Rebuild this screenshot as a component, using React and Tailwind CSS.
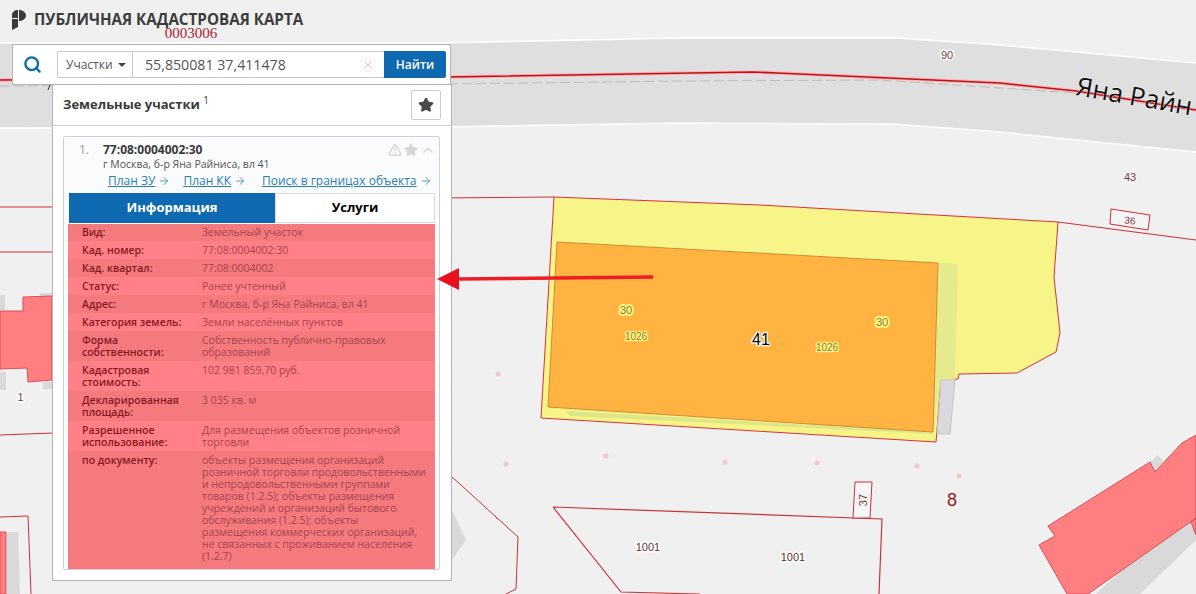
import React from 'react';
import { ArrowRight, ChevronUp, Search, Star, TriangleAlert, X } from 'lucide-react';

const rows = [
    { label: 'Вид:', value: 'Земельный участок', h: 'h-[17px]', dark: true },
    { label: 'Кад. номер:', value: '77:08:0004002:30', h: 'h-[18px]' },
    { label: 'Кад. квартал:', value: '77:08:0004002', h: 'h-[18px]', dark: true },
    { label: 'Статус:', value: 'Ранее учтенный', h: 'h-[18px]' },
    { label: 'Адрес:', value: 'г Москва, б-р Яна Райниса, вл 41', h: 'h-[18px]', dark: true },
    { label: 'Категория земель:', value: 'Земли населённых пунктов', h: 'h-[18px]' },
    { label: ['Форма', 'собственности:'], value: ['Собственность публично-правовых', 'образований'], h: 'h-[30px]', dark: true },
    { label: ['Кадастровая', 'стоимость:'], value: '102 981 859,70 руб.', h: 'h-[30px]' },
    { label: ['Декларированная', 'площадь:'], value: '3 035 кв. м', h: 'h-[30px]', dark: true },
    { label: ['Разрешенное', 'использование:'], value: ['Для размещения объектов розничной', 'торговли'], h: 'h-[30px]' },
    {
        label: 'по документу:',
        value: [
            'объекты размещения организаций',
            'розничной торговли продовольственными',
            'и непродовольственными группами',
            'товаров (1.2.5); объекты размещения',
            'учреждений и организаций бытового',
            'обслуживания (1.2.5); объекты',
            'размещения коммерческих организаций,',
            'не связанных с проживанием населения',
            '(1.2.7)',
        ],
        h: 'h-[118px]',
        dark: true,
    },
];

const Lines = ({ text }) =>
    [].concat(text).map(line => (
        <div key={line} className="whitespace-nowrap">{line}</div>
    ));

const MapLabel = ({ x, y, size = 11, fill = '#7a3b3b', halo = '#ffffff', width = 3, children, ...rest }) => (
    <text
        x={x}
        y={y}
        textAnchor="middle"
        fontSize={size}
        fill={fill}
        stroke={halo}
        strokeWidth={width}
        strokeLinejoin="round"
        paintOrder="stroke"
        fontFamily="'Liberation Sans', sans-serif"
        {...rest}
    >
        {children}
    </text>
);

// the cadastral map under the panels
const CadastreMap = () => (
    <svg className="absolute inset-0" width="1196" height="594" viewBox="0 0 1196 594">
        {/* road */}
        <path d="M0 43 L440 43 L680 38 L898 38 L1000 45 L1196 63 L1196 152 L1000 132 L893 124 L680 123 L440 127 L0 128 Z" fill="#dfdfdf" />
        <path d="M0 43 L440 43 L680 38 L898 38 L1000 45 L1196 63" fill="none" stroke="#ffffff" strokeWidth="1.5" />
        <path d="M0 128 L440 127 L680 123 L893 124 L1000 132 L1196 152" fill="none" stroke="#ffffff" strokeWidth="1.5" />
        <path d="M0 86 L448 84 L680 81 L880 80 L1076 93" fill="none" stroke="#c4b8b8" strokeWidth="1" strokeDasharray="10 4" />
        <path d="M0 80 L448 77 L753 72 L777 73 L1000 83 L1076 91 L1196 110" fill="none" stroke="#ffb4b4" strokeWidth="3.5" />
        <path d="M0 80 L448 77 L753 72 L777 73 L1000 83 L1076 91 L1196 110" fill="none" stroke="#b9141c" strokeWidth="1.5" />
        <path d="M48 90 L50 85" stroke="#333333" strokeWidth="1" />

        {/* parcel line above the lot */}
        <path d="M0 207 L53 207 M0 252 L53 252 M440 198 L554 197 M1058 222 L1196 240 M0 435 L53 433" fill="none" stroke="#c8323a" strokeWidth="1" />

        {/* lot with the building */}
        <path d="M554 197 L760 205 L1058 222 L1054 277 L1060 333 L1056 352 L1017 373 L959 374 L958 379 L941 380 L936 442 L541 418 Z" fill="#f7f587" stroke="#d8323a" strokeWidth="1" />
        <path d="M938 263 L958 264 L955 380 L941 380 L933 433 Z" fill="#e6ea8c" />
        <path d="M941 380 L955 380 L950 434 L937 434 Z" fill="#d9d9dc" stroke="#c4c4c6" strokeWidth="1" />
        <path d="M566 411 L933 432 L933 434 L570 416 Z" fill="#dde68a" />
        <path d="M557 242 L938 263 L933 432 L548 407 Z" fill="#ffb340" stroke="#d08a38" strokeWidth="1" />

        {/* buildings on the left */}
        <path d="M0 295 H5 V310 H0 Z M40 293 H52 V297 H40 Z M0 372 H6 V390 H0 Z M43 382 H52 V389 H43 Z M7 532 H18 L20 594 H7 Z" fill="#d9d9d9" />
        <path d="M0 311 L23 311 L23 297 L52 296 L52 380 L28 382 L27 368 L0 369 Z" fill="#ff7f80" stroke="#d8505a" strokeWidth="1" />
        <path d="M0 532 H6 V594 H0 Z" fill="#ff7f80" stroke="#d8505a" strokeWidth="1" />
        <path d="M0 517 L28 516 L31 594" fill="none" stroke="#c8323a" strokeWidth="1" />
        <MapLabel x={20.5} y={401} size={11}>1</MapLabel>

        {/* lower parcels */}
        <path d="M553 507 L882 519 L879 594 M553 507 L621 592 L700 594" fill="none" stroke="#c8323a" strokeWidth="1.2" />
        <path d="M855 482 L872 482 L870 518 L853 518 Z" fill="#f6f6f6" stroke="#c8323a" strokeWidth="1" />
        <path d="M451 476 L518 537 L516 589 L506 594" fill="none" stroke="#c8323a" strokeWidth="1" />
        <path d="M452 510 L466 540 L452 560 Z" fill="#d9d9d9" />
        <path d="M1111 209 L1150 215 L1148 230 L1110 224 Z" fill="#f4f4f4" stroke="#c8323a" strokeWidth="1" />

        {/* right building */}
        <path d="M1096 594 L1196 500 L1196 540 L1140 594 Z" fill="#d9d9d9" />
        <path d="M1150 462 L1158 455 L1164 462 L1155 472 Z" fill="#d9d9d9" />
        <path d="M1039 545 L1055 536 L1048 526 L1150 462 L1155 472 L1182 443 L1196 435 L1196 535 L1191 522 L1196 518 L1088 594 L1067 594 Z" fill="#ff7f80" stroke="#d8505a" strokeWidth="1" />

        {/* street-lamp dots */}
        {[[506, 464], [606, 456], [725, 462], [817, 463], [917, 466], [959, 476], [498, 374]].map(([cx, cy]) => (
            <circle key={cx} cx={cx} cy={cy} r="2.5" fill="#f4c6c8" />
        ))}

        {/* map captions */}
        <text x="191" y="38" textAnchor="middle" fontSize="15" fill="#a8242c" fontFamily="'Liberation Serif', serif">0003006</text>
        <text x="0" y="0" fontSize="26" fill="#111111" stroke="#ffffff" strokeWidth="0.6" paintOrder="stroke" fontFamily="'Open Sans', sans-serif" transform="translate(1075 95) rotate(10)">Яна Райн</text>
        <MapLabel x={947} y={59} size={11}>90</MapLabel>
        <MapLabel x={1130} y={181} size={11} halo="#f4f4f4">43</MapLabel>
        <MapLabel x={1130} y={224} size={10} transform="rotate(7 1130 220)" halo="#f4f4f4">36</MapLabel>
        <MapLabel x={863} y={504} size={11} transform="rotate(-90 863 500)" halo="#f6f6f6">37</MapLabel>
        <MapLabel x={648} y={551} size={11} fill="#5f3030">1001</MapLabel>
        <MapLabel x={793} y={561} size={11} fill="#5f3030">1001</MapLabel>
        <MapLabel x={952} y={506} size={18} fill="#8f1a22" width={0}>8</MapLabel>

        <MapLabel x={626} y={314} fill="#8d7a30" halo="#fdf583" width={4}>30</MapLabel>
        <MapLabel x={882} y={326} fill="#8d7a30" halo="#fdf583" width={4}>30</MapLabel>
        <MapLabel x={636} y={340} size={10} fill="#8d7a30" halo="#fdf583" width={2.5}>1026</MapLabel>
        <MapLabel x={827} y={351} size={10} fill="#8d7a30" halo="#fdf583" width={2.5}>1026</MapLabel>
        <MapLabel x={761} y={345} size={16} fill="#000000" halo="#ffffff" width={2.5}>41</MapLabel>
    </svg>
);

const Logo = () => (
    <svg width="14" height="20" viewBox="0 0 14 20" fill="#3a3a3a">
        <path d="M0 5 C0 2 2.5 0 6 0 V8 H0 Z" />
        <path d="M7 0 C11 0 14 2.5 14 5.5 C14 8.5 11 11 7 11 Z" />
        <path d="M0 9 H6 V17 L0 20 Z" />
    </svg>
);

const PlanLink = ({ children }) => (
    <span className="flex items-center gap-[3px] underline">
        {children}
        <ArrowRight size={12} strokeWidth={1.5} />
    </span>
);

export default function App() {
    return (
        <div
            className="relative w-[1196px] h-[594px] overflow-hidden bg-[#f0f0f0]"
            style={{ fontFamily: "'Open Sans', sans-serif" }}
        >
            <CadastreMap />

            <div className="relative flex flex-col items-start">
                {/* title */}
                <div className="flex items-center gap-[8px] h-[44px] pl-[12px] pb-[4px]">
                    <Logo />
                    <span className="text-[15.2px] font-bold leading-none text-[#3c3c3c]">ПУБЛИЧНАЯ КАДАСТРОВАЯ КАРТА</span>
                </div>

                {/* search bar */}
                <div className="flex items-center ml-[12px] w-[439px] h-[41px] bg-white border border-[#b4b4b4]">
                    <div className="w-[44px] pl-[10px] text-[#0f6cb0]">
                        <Search size={19} strokeWidth={3} />
                    </div>
                    <div className="flex h-[27px] w-[389px]">
                        <div className="flex items-center gap-[5px] w-[76px] pl-[8px] border border-[#c8c8c8] rounded-l-[2px] text-[12px] text-[#555555]">
                            Участки
                            <span className="w-0 h-0 border-x-[4px] border-x-transparent border-t-[4px] border-t-[#444444]" />
                        </div>
                        <div className="flex items-center justify-between flex-1 pl-[12px] pr-[10px] border-y border-[#c8c8c8] text-[14.2px] text-[#555555]">
                            55,850081 37,411478
                            <X size={12} className="text-[#c8c8c8]" />
                        </div>
                        <div className="flex items-center justify-center w-[62px] bg-[#0f69b0] rounded-r-[2px] text-[12px] font-semibold text-white">
                            Найти
                        </div>
                    </div>
                </div>

                {/* results */}
                <div className="ml-[52px] w-[400px] h-[497px] -mt-px bg-white border border-[#b4b4b4]">
                    <div className="flex items-center justify-between h-[41px] pl-[10px] pr-[10px] border-b border-[#d0d0d0]">
                        <div className="text-[13px] font-bold text-[#3a3a3a]">
                            Земельные участки <sup className="text-[10px] font-normal">1</sup>
                        </div>
                        <div className="flex items-center justify-center w-[30px] h-[30px] border border-[#cccccc] rounded-[2px] text-[#4a4a4a]">
                            <Star size={16} fill="currentColor" />
                        </div>
                    </div>

                    <div className="ml-[10px] mt-[10px] w-[377px] h-[434px] bg-[#fafbfc] border border-[#cfd3d6] rounded-[2px]">
                        <div className="h-[56px] pl-[15px]">
                            <div className="flex pt-[5px]">
                                <span className="w-[24px] text-[12px] leading-[16px] text-[#999999]">1.</span>
                                <div>
                                    <div className="text-[12px] font-bold leading-[16px] text-[#3a3a3a]">77:08:0004002:30</div>
                                    <div className="text-[10.5px] leading-[12px] text-[#555555]">г Москва, б-р Яна Райниса, вл 41</div>
                                </div>
                                <div className="flex items-center gap-[2px] h-[16px] ml-auto mr-[3px] text-[#d5d5d5]">
                                    <TriangleAlert size={14} strokeWidth={2.5} />
                                    <Star size={14} fill="currentColor" />
                                    <ChevronUp size={16} />
                                </div>
                            </div>
                            <div className="flex gap-[13px] pl-[29px] pt-[3px] text-[12px] leading-[16px] text-[#2a7fae]">
                                <PlanLink>План ЗУ</PlanLink>
                                <PlanLink>План КК</PlanLink>
                                <span className="ml-[3px]">
                                    <PlanLink>Поиск в границах объекта</PlanLink>
                                </span>
                            </div>
                        </div>

                        <div className="flex ml-[5px] w-[366px] h-[30px] text-[13px] font-bold">
                            <div className="flex items-center justify-center w-[206px] bg-[#0f69b0] text-white">Информация</div>
                            <div className="flex items-center justify-center flex-1 bg-white border border-[#dddddd] text-black">Услуги</div>
                        </div>

                        <div className="ml-[4px] mt-px w-[367px] text-[10.5px] leading-[12px]">
                            {rows.map((row, i) => (
                                <div key={i} className={`flex ${i === 0 ? 'pt-[2px]' : 'pt-[3px]'} ${row.h} ${row.dark ? 'bg-[#f47a7e]' : 'bg-[#ff8086]'}`}>
                                    <div className="w-[134px] pl-[14px] font-semibold text-[#86181e]">
                                        <Lines text={row.label} />
                                    </div>
                                    <div className="text-[#a8434a]">
                                        <Lines text={row.value} />
                                    </div>
                                </div>
                            ))}
                        </div>
                    </div>
                </div>
            </div>

            {/* red arrow points at the panel, so it lies over it */}
            <svg className="absolute left-[430px] top-[260px]" width="230" height="40" viewBox="430 260 230 40">
                <path d="M653 277 L456 279" stroke="#ee1c25" strokeWidth="3.5" />
                <path d="M437 279 L459 268 L459 290 Z" fill="#e8101c" />
            </svg>
        </div>
    );
}
